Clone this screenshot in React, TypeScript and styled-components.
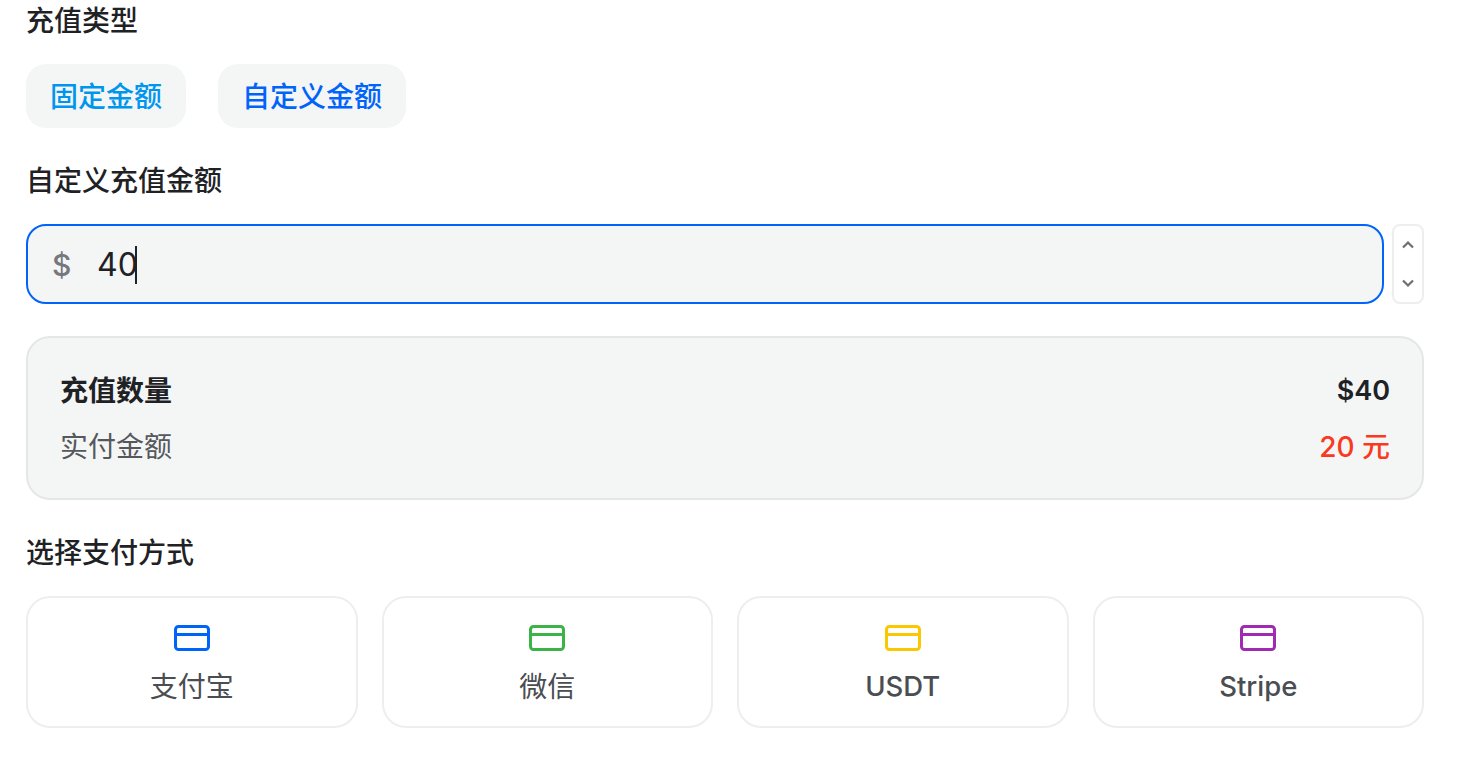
import styled, { createGlobalStyle } from 'styled-components';

const GlobalStyle = createGlobalStyle`
    html, body {
        margin: 0;
        padding: 0;
        background: #ffffff;
    }
    * {
        box-sizing: border-box;
    }
    body {
        font-family: Inter, "Noto Sans CJK SC", sans-serif;
        color: #1f2225;
    }
`;

const Page = styled.div`
    width: 1464px;
    height: 760px;
    padding: 0 40px 0 26px;
    overflow: hidden;
`;

const Label = styled.div`
    height: 40px;
    padding-top: 1px;
    font-size: 28px;
    font-weight: 500;
    line-height: 40px;
    color: #1f2225;
`;

const TypeRow = styled.div`
    display: flex;
    gap: 32px;
    margin: 24px 0 32px;
`;

const TypeButton = styled.button<{ $color: string }>`
    height: 64px;
    padding: 2px 24px 0;
    border: 0;
    border-radius: 20px;
    background: #f4f5f5;
    color: ${(p) => p.$color};
    font-family: inherit;
    font-size: 28px;
    font-weight: 500;
    line-height: 40px;
`;

const InputRow = styled.div`
    display: flex;
    gap: 8px;
    margin: 24px 0 32px;
`;

const InputBox = styled.div`
    flex: 1;
    height: 80px;
    display: flex;
    align-items: center;
    padding: 2px 24px 0;
    border: 2px solid #0064fa;
    border-radius: 20px;
    background: #f4f5f5;
`;

const Prefix = styled.span`
    width: 45px;
    font-size: 30px;
    font-weight: 500;
    color: #75787c;
`;

const Value = styled.span`
    font-size: 32px;
    line-height: 40px;
    color: #1f2225;
`;

const Caret = styled.span`
    width: 2px;
    height: 38px;
    margin-left: -3px;
    background: #1f2225;
`;

const Spinner = styled.div`
    width: 32px;
    height: 80px;
    display: flex;
    flex-direction: column;
    align-items: center;
    justify-content: space-between;
    padding: 14px 0;
    border: 2px solid #eeeeee;
    border-radius: 8px;
    color: #6b6e72;
`;

const Summary = styled.div`
    height: 164px;
    display: flex;
    flex-direction: column;
    justify-content: center;
    gap: 16px;
    margin-bottom: 32px;
    padding: 0 32px;
    border: 2px solid #e5e7e7;
    border-radius: 24px;
    background: #f4f5f5;
`;

const SummaryRow = styled.div`
    display: flex;
    justify-content: space-between;
    align-items: center;
    height: 40px;
`;

const SummaryName = styled.span<{ $strong?: boolean }>`
    margin-top: -2px;
    font-size: 28px;
    font-weight: ${(p) => (p.$strong ? 600 : 400)};
    color: ${(p) => (p.$strong ? '#1f2225' : '#55585c')};
`;

const SummaryValue = styled.span<{ $red?: boolean }>`
    margin-top: ${(p) => (p.$red ? -3 : 1)}px;
    font-size: ${(p) => (p.$red ? 28 : 27)}px;
    font-weight: ${(p) => (p.$red ? 500 : 600)};
    color: ${(p) => (p.$red ? '#f93920' : '#1f2225')};
`;

const PayGrid = styled.div`
    display: grid;
    grid-template-columns: repeat(4, 1fr);
    gap: 24px;
    margin-top: 24px;
`;

const PayCard = styled.div`
    height: 132px;
    display: flex;
    flex-direction: column;
    align-items: center;
    padding-top: 27px;
    border: 2px solid #eeeeee;
    border-radius: 24px;
    background: #ffffff;
`;

const PayName = styled.div<{ $latin?: boolean }>`
    margin-top: ${(p) => (p.$latin ? 15 : 16)}px;
    font-size: ${(p) => (p.$latin ? 27.5 : 28)}px;
    line-height: 40px;
    font-weight: ${(p) => (p.$latin ? 500 : 400)};
    color: #4a4d51;
`;

const CardIcon = ({ color }: { color: string }) => (
    <svg width="36" height="26" viewBox="0 0 36 26" fill="none" stroke={color} strokeWidth="3">
        <rect x="1.5" y="1.5" width="33" height="23" rx="3" />
        <path d="M1.5 9.5h33" />
    </svg>
);

const Chevron = ({ up }: { up?: boolean }) => (
    <svg width="14" height="10" viewBox="0 0 14 10" fill="none" stroke="currentColor" strokeWidth="2.2">
        <path d={up ? 'M2 7.5L7 2.5L12 7.5' : 'M2 2.5L7 7.5L12 2.5'} />
    </svg>
);

const methods = [
    { name: '支付宝', color: '#0064fa' },
    { name: '微信', color: '#3bb346' },
    { name: 'USDT', color: '#fac800', latin: true },
    { name: 'Stripe', color: '#a12ab3', latin: true },
];

export default function App() {
    return (
        <>
            <GlobalStyle />
            <Page>
                <Label>充值类型</Label>
                <TypeRow>
                    <TypeButton $color="#0095ee">固定金额</TypeButton>
                    <TypeButton $color="#0064fa">自定义金额</TypeButton>
                </TypeRow>
                <Label>自定义充值金额</Label>
                <InputRow>
                    <InputBox>
                        <Prefix>$</Prefix>
                        <Value>40</Value>
                        <Caret />
                    </InputBox>
                    <Spinner>
                        <Chevron up />
                        <Chevron />
                    </Spinner>
                </InputRow>
                <Summary>
                    <SummaryRow>
                        <SummaryName $strong>充值数量</SummaryName>
                        <SummaryValue>$40</SummaryValue>
                    </SummaryRow>
                    <SummaryRow>
                        <SummaryName>实付金额</SummaryName>
                        <SummaryValue $red>20 元</SummaryValue>
                    </SummaryRow>
                </Summary>
                <Label>选择支付方式</Label>
                <PayGrid>
                    {methods.map((m) => (
                        <PayCard key={m.name}>
                            <CardIcon color={m.color} />
                            <PayName $latin={m.latin}>{m.name}</PayName>
                        </PayCard>
                    ))}
                </PayGrid>
            </Page>
        </>
    );
}
